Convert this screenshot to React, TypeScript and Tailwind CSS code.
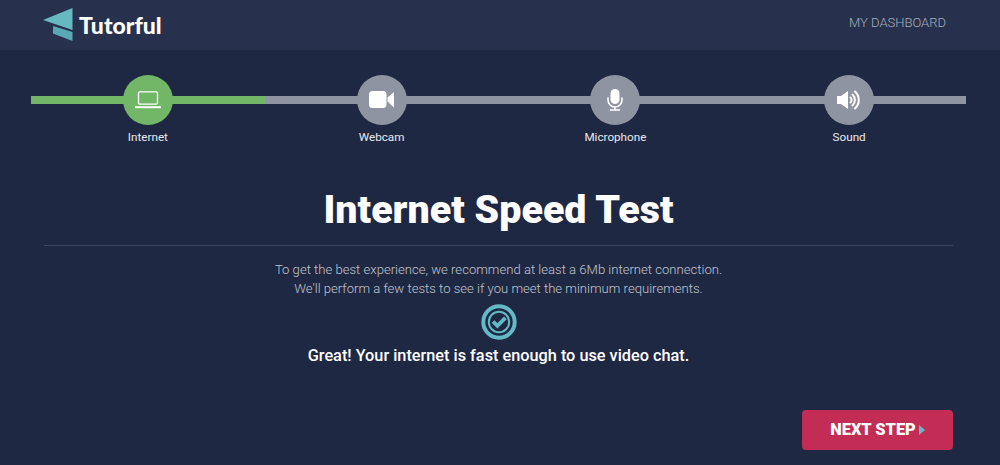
import React from "react";

const Roboto = "font-['Roboto',sans-serif]";

function Laptop() {
  return (
    <svg width="26" height="18" viewBox="0 0 26 18" fill="none" stroke="white">
      <rect x="3.5" y="0.8" width="19" height="12.4" rx="1.5" strokeWidth="1.3" />
      <path d="M0 16.2h26" strokeWidth="2" />
    </svg>
  );
}
function Cam() {
  return (
    <svg width="26" height="18" viewBox="0 0 26 18" fill="white">
      <rect x="0" y="0" width="17.5" height="17" rx="3.5" />
      <path d="M18.5 6.5 25 1v15.5L18.5 10.5z" />
    </svg>
  );
}
function Mic() {
  return (
    <svg width="16" height="22" viewBox="0 0 16 22" fill="none" stroke="white">
      <rect x="3.5" y="0" width="9" height="15" rx="4.5" fill="white" stroke="none" />
      <path d="M1 9v2a7 7 0 0 0 14 0V9M8 18v3M3.5 21h9" strokeWidth="1.6" strokeLinecap="round" />
    </svg>
  );
}
function Sound() {
  return (
    <svg width="24" height="20" viewBox="0 0 24 20" fill="none" stroke="white">
      <path d="M0 6h4L11 1v18L4 14H0z" fill="white" stroke="none" />
      <path d="M13.5 7.5a3.5 3.5 0 0 1 0 5" strokeWidth="2" strokeLinecap="round" />
      <path d="M15.5 4.5a7.5 7.5 0 0 1 0 11" strokeWidth="2" strokeLinecap="round" />
      <path d="M18 1.5a11.5 11.5 0 0 1 0 17" strokeWidth="2" strokeLinecap="round" />
    </svg>
  );
}

const steps = [
  { label: "Internet", icon: <Laptop />, active: true },
  { label: "Webcam", icon: <Cam />, active: false },
  { label: "Microphone", icon: <Mic />, active: false },
  { label: "Sound", icon: <Sound />, active: false },
];

export default function App() {
  return (
    <div className={`h-[465px] w-[1000px] overflow-hidden bg-[#1f2843] ${Roboto}`}>
      <header className="flex h-[50px] items-center justify-between bg-[#27314d] pl-[43px] pr-[54px]">
        <div className="flex items-center gap-[5px]">
          <svg width="31" height="34" viewBox="0 0 31 34">
            <path d="M0 12 29.5 0v22z" fill="#66b9c1" />
            <path d="M10 18 29.5 24v9L10 25.5z" fill="#57a9b3" />
          </svg>
          <span className="font-['Lato',sans-serif] text-[23px] font-black leading-none text-white">Tutorful</span>
        </div>
        <span className="-translate-y-[2px] text-[13px] font-light text-[#a7adbc]">MY DASHBOARD</span>
      </header>

      <main className="pl-[31px] pr-[34px]">
        <div className="mt-[25px] grid h-[50px] grid-cols-4 bg-[linear-gradient(#8f94a3,#8f94a3)] bg-[length:100%_8px] bg-center bg-no-repeat">
          {steps.map((s) => (
            <div
              key={s.label}
              className={`flex items-center justify-center bg-[length:100%_8px] bg-center bg-no-repeat ${
                s.active ? "bg-[linear-gradient(#71b767,#71b767)]" : ""
              }`}
            >
              <div
                className={`flex h-[50px] w-[50px] items-center justify-center rounded-full ${
                  s.active ? "bg-[#71b767]" : "bg-[#8f94a3]"
                }`}
              >
                {s.icon}
              </div>
            </div>
          ))}
        </div>
        <div className="mt-[4px] grid grid-cols-4">
          {steps.map((s) => (
            <div key={s.label} className="text-center text-[11.7px] leading-[16px] text-[#e8e9ee]">
              {s.label}
            </div>
          ))}
        </div>

        <div className="ml-[13px] mr-[13px] mt-[41px] border-b border-[#3c4560] pb-[12px] text-center">
          <h1 className="text-[39.4px] font-black leading-[47px] text-white">Internet Speed Test</h1>
        </div>

        <p className="mt-[14px] text-center text-[13.1px] font-light leading-[19px] text-[#c0c4ce]">
          To get the best experience, we recommend at least a 6Mb internet connection.
          <br />
          We'll perform a few tests to see if you meet the minimum requirements.
        </p>

        <div className="mt-[6px] flex justify-center">
          <svg width="36" height="36" viewBox="0 0 36 36" fill="none" stroke="#63bac4">
            <circle cx="18" cy="18" r="15.7" strokeWidth="4" />
            <circle cx="18" cy="18" r="10.2" strokeWidth="2" />
            <path d="M12 17.5l4.4 4.4 8-8" strokeWidth="3.8" />
          </svg>
        </div>
        <p className="mt-[6px] text-center text-[16.3px] font-medium leading-[20px] text-white">
          Great! Your internet is fast enough to use video chat.
        </p>

        <div className="mt-[44px] flex justify-end pr-[13px]">
          <button className="flex h-[40px] w-[151px] items-center justify-center gap-[3px] rounded-[4px] bg-[#c32c54] text-[16.4px] font-black text-white">
            NEXT STEP
            <svg width="6" height="10" viewBox="0 0 6 10">
              <path d="M0 0l6 5-6 5z" fill="#63bac4" />
            </svg>
          </button>
        </div>
      </main>
    </div>
  );
}
